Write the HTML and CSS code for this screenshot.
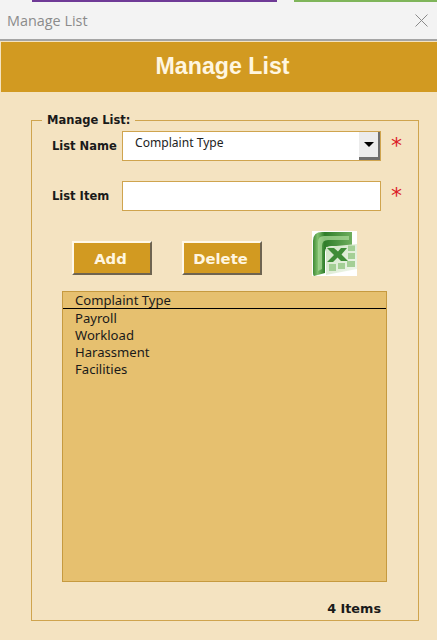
FILE: index.html
```html
<!DOCTYPE html>
<html lang="en">

<head>
    <meta charset="UTF-8">
    <meta name="viewport" content="width=device-width, initial-scale=1.0">
    <title>Manage List</title>
    <link rel="stylesheet" href="styles.css">
</head>

<body>
    <div class="strip">
        <span class="strip-gap-a"></span>
        <span class="strip-purple"></span>
        <span class="strip-gap-b"></span>
        <span class="strip-green"></span>
    </div>
    <div class="titlebar">
        <span class="titlebar-text">Manage List</span>
        <svg class="close" width="13" height="13" viewBox="0 0 13 13">
            <path d="M0.5 0.5L12.5 12.5M12.5 0.5L0.5 12.5" stroke="#8a8a8a" stroke-width="1" fill="none" />
        </svg>
    </div>
    <div class="window">
        <h1 class="header">Manage List</h1>
        <div class="content">
            <fieldset class="panel">
                <legend>Manage List:</legend>

                <div class="row row-name">
                    <label class="row-label">List Name</label>
                    <div class="combo">
                        <span class="combo-text">Complaint Type</span>
                        <span class="combo-arrow"><i></i></span>
                    </div>
                    <span class="required">*</span>
                </div>

                <div class="row row-item">
                    <label class="row-label" for="listItem">List Item</label>
                    <input class="text-input" id="listItem" type="text">
                    <span class="required">*</span>
                </div>

                <div class="actions">
                    <button class="btn">Add</button>
                    <button class="btn">Delete</button>
                    <svg class="excel" width="45" height="45" viewBox="0 0 45 45">
                        <defs>
                            <linearGradient id="swoosh" x1="0" y1="0" x2="1" y2="0">
                                <stop offset="0" stop-color="#3f8a34" />
                                <stop offset="0.12" stop-color="#7fbf6c" />
                                <stop offset="0.3" stop-color="#2f7d2a" />
                                <stop offset="1" stop-color="#6fae5e" />
                            </linearGradient>
                            <linearGradient id="sheet" x1="0" y1="0" x2="1" y2="1">
                                <stop offset="0" stop-color="#cfe3c4" />
                                <stop offset="1" stop-color="#f1f7ec" />
                            </linearGradient>
                        </defs>
                        <rect width="45" height="45" fill="#fff" />
                        <path d="M1 10Q1 1 10 1H40V15H20Q13 15 13 21V42L2 45Q1 45 1 42Z" fill="url(#swoosh)" />
                        <path d="M6 11Q6 5 12 5H37V9H16Q10 9 10 15V38L6 40Z" fill="#a9d897" opacity="0.75" />
                        <path d="M14 16L45 13V38L14 44Z" fill="url(#sheet)" />
                        <path d="M36 14.5H43V20H36ZM36 22H43V28H36ZM35 30H43V36H35ZM26 32H33V38H26ZM17 33H24V40H17Z" fill="#a4cf96" />
                        <path d="M15 17H22L26 20.5L29 17H35L29.5 23.5L36 30H29L25.5 26.500L21 31H15L22 24Z" fill="#3f8c37" />
                    </svg>
                </div>

                <div class="list">
                    <div class="list-head">Complaint Type</div>
                    <div class="list-item">Payroll</div>
                    <div class="list-item">Workload</div>
                    <div class="list-item">Harassment</div>
                    <div class="list-item">Facilities</div>
                </div>

                <div class="count">4 Items</div>
            </fieldset>
        </div>
    </div>
</body>

</html>
```

FILE: styles.css
```css
html,
body {
    margin: 0;
    padding: 0;
}

body {
    width: 437px;
    height: 640px;
    overflow: hidden;
    background-color: #F4E3C1;
    font-family: "DejaVu Sans", sans-serif;
}

.strip {
    display: flex;
    height: 2px;
    background-color: #f3f3f3;
}

.strip-gap-a {
    width: 32px;
}

.strip-purple {
    width: 245px;
    background-color: #6f3a96;
}

.strip-gap-b {
    width: 17px;
}

.strip-green {
    flex: 1;
    background-color: #7fb55a;
}

.titlebar {
    display: flex;
    align-items: center;
    justify-content: space-between;
    height: 37px;
    padding: 0 9px 0 7px;
    background-color: #f3f3f3;
}

.titlebar-text {
    font-family: "Open Sans", sans-serif;
    font-size: 14.4px;
    color: #8b8b8b;
}

.close {
    display: block;
}

.window {
    border-top: 2px solid #a5a5a5;
    padding-left: 1px;
}

.header {
    margin: 1px 0 0;
    padding-left: 7px;
    height: 50px;
    line-height: 48px;
    text-align: center;
    background-color: #D29A21;
    color: #FFF6E0;
    font-family: "Liberation Sans", sans-serif;
    font-size: 23.2px;
    font-weight: bold;
}

.content {
    padding: 21px 18px 0 30px;
}

.panel {
    margin: 0;
    padding: 0;
    height: 506px;
    box-sizing: content-box;
    border: 1px solid #CFA44E;
}

.panel legend {
    margin-left: 10px;
    padding: 0 5px;
    font-size: 11.5px;
    font-weight: bold;
    line-height: 14px;
    color: #1a1a1a;
}

.row {
    display: flex;
    align-items: center;
    height: 30px;
    padding-left: 20px;
}

.row-name {
    margin-top: 4px;
}

.row-item {
    margin-top: 20px;
}

.row-label {
    width: 70px;
    font-size: 11.5px;
    font-weight: bold;
    color: #1a1a1a;
}

.combo {
    display: flex;
    box-sizing: border-box;
    width: 259px;
    height: 30px;
    background-color: #fff;
    border: 1px solid #CFA44E;
}

.combo-text {
    flex: 1;
    padding: 2px 0 0 12px;
    font-family: "Noto Sans", sans-serif;
    font-size: 12.1px;
    color: #222;
}

.combo-arrow {
    display: flex;
    align-items: center;
    justify-content: center;
    width: 21px;
    background-color: #ececec;
    border-right: 2px solid #6e6e6e;
    border-bottom: 3px solid #6e6e6e;
    box-sizing: border-box;
}

.combo-arrow i {
    width: 0;
    height: 0;
    border-left: 5px solid transparent;
    border-right: 5px solid transparent;
    border-top: 5px solid #000;
}

.text-input {
    box-sizing: border-box;
    width: 259px;
    height: 30px;
    padding: 0 12px;
    background-color: #fff;
    border: 1px solid #CFA44E;
    border-radius: 0;
    outline: none;
}

.required {
    margin-left: 10px;
    font-family: "DejaVu Sans", sans-serif;
    font-size: 22px;
    line-height: 30px;
    height: 30px;
    color: #dc2028;
}

.actions {
    display: flex;
    align-items: flex-start;
    height: 45px;
    margin: 20px 0 0 40px;
}

.btn {
    box-sizing: border-box;
    width: 80px;
    height: 34px;
    margin-top: 10px;
    margin-right: 30px;
    padding: 0 3px 0 0;
    background-color: #D29A21;
    color: #FFF6E0;
    font-family: "DejaVu Sans", sans-serif;
    font-size: 14.8px;
    font-weight: bold;
    border: 2px solid;
    border-color: #FFF8E8 #6e6450 #6e6450 #FFF8E8;
}

.excel {
    display: block;
    margin-left: 20px;
}

.list {
    box-sizing: border-box;
    width: 325px;
    height: 291px;
    margin: 15px 0 0 30px;
    background-color: #E6C06F;
    border: 1px solid #C69A3F;
    font-family: "Noto Sans", sans-serif;
    font-size: 13.1px;
    line-height: 17px;
    color: #1a1a1a;
}

.list-head {
    height: 16px;
    margin-bottom: 1px;
    padding-left: 12px;
    border-bottom: 1px solid #000;
}

.list-item {
    padding-left: 12px;
}

.count {
    margin: 19px 37px 0 0;
    text-align: right;
    font-size: 12.8px;
    font-weight: bold;
    color: #1a1a1a;
}
```
